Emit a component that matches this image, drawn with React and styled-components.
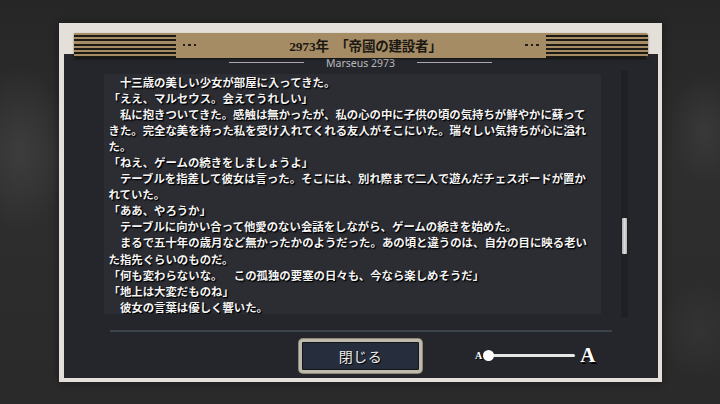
import React from 'react'
import styled, { createGlobalStyle } from 'styled-components'

const GlobalStyle = createGlobalStyle`
  html, body {
    margin: 0;
    padding: 0;
    background: #2b2b2b;
  }
`

const Page = styled.div`
  width: 720px;
  height: 404px;
  display: flex;
  align-items: center;
  justify-content: center;
  background:
    radial-gradient(ellipse 70px 120px at 20px 150px, rgba(80, 80, 80, 0.45), transparent 70%),
    radial-gradient(ellipse 50px 80px at 705px 130px, rgba(80, 80, 80, 0.35), transparent 70%),
    radial-gradient(ellipse 60px 70px at 700px 330px, rgba(70, 70, 70, 0.3), transparent 70%),
    linear-gradient(#262626, #2e2e2e 40%, #2a2a2a);
`

const Frame = styled.div`
  width: 603px;
  height: 359px;
  box-sizing: border-box;
  padding-top: 10px;
  display: flex;
  flex-direction: column;
  background: #e4dfd8;
  box-shadow: 0 0 8px rgba(0, 0, 0, 0.4);
`

const Header = styled.div`
  position: relative;
  z-index: 2;
  height: 25px;
  margin: 0 14px 0 15px;
  display: flex;
  align-items: center;
  background: #a58c64;
  border-radius: 1px 3px 3px 1px;
  box-shadow: 0 1px 2px rgba(0, 0, 0, 0.55);
`

const Stripes = styled.div`
  width: 102px;
  height: 25px;
  background: repeating-linear-gradient(
    to bottom,
    #a58c64 0,
    #a58c64 2.2px,
    #1d1a15 2.2px,
    #1d1a15 4.2px
  );
  border-radius: ${p => (p.$right ? '0 3px 3px 0' : '1px 0 0 1px')};
`

const Dots = styled.div`
  display: flex;
  gap: 3px;
  margin: ${p => (p.$right ? '0 7px 0 0' : '0 0 0 7px')};

  span {
    width: 2.5px;
    height: 2.5px;
    background: #231e17;
  }
`

const Title = styled.div`
  flex: 1;
  text-align: center;
  padding-left: 10px;
  font-family: 'Liberation Serif', 'Noto Sans CJK JP', serif;
  font-weight: 700;
  font-size: 13.5px;
  color: #1c1914;
  letter-spacing: -0.2px;
`

const Panel = styled.div`
  position: relative;
  z-index: 1;
  flex: 1;
  margin: -4px 4px 4px 5px;
  padding: 3px 0 5px;
  display: flex;
  flex-direction: column;
  background: #25262b;
`

const Subtitle = styled.div`
  height: 12px;
  display: flex;
  align-items: center;
  justify-content: center;
  gap: 22px;
  font-family: 'Noto Sans', sans-serif;
  font-size: 10.5px;
  color: #b9b9bb;
`

const Rule = styled.div`
  width: 75px;
  height: 1px;
  background: #a9a9ab;
`

const Body = styled.div`
  margin-top: 5px;
  height: 240px;
  display: flex;
`

const TextBox = styled.div`
  width: 497px;
  margin-left: 40px;
  overflow: hidden;
  box-sizing: border-box;
  padding-left: 5px;
  background: #2c2d33;
`

const Story = styled.div`
  width: 483px;
  font-family: 'Noto Sans CJK JP', sans-serif;
  font-weight: 700;
  font-size: 11.4px;
  line-height: 16.1px;
  color: #f4f4f4;
  text-shadow: 1px 1px 0 #000, 1px 1px 2px #000;
  text-spacing-trim: space-all;
  line-break: strict;

  p {
    margin: 0;
  }
`

const Track = styled.div`
  width: 7px;
  margin: -3px 0 -3px 20px;
  background: #1f2024;
`

const Thumb = styled.div`
  width: 5px;
  height: 36px;
  margin: 147px 0 0 1px;
  border-radius: 1px;
  background: linear-gradient(to right, #a9a9a9, #dcdcdc 50%, #b5b5b5);
`

const Separator = styled.div`
  height: 2px;
  margin: 16px 46px 0;
  background: #3d434b;
`

const Footer = styled.div`
  margin-top: 7px;
  height: 34px;
  display: grid;
  grid-template-columns: 1fr 123px 1fr;
  align-items: center;
`

const CloseButton = styled.button`
  grid-column: 2;
  width: 123px;
  height: 34px;
  padding: 0;
  box-sizing: border-box;
  border: 3px solid #bfbaab;
  border-radius: 4px;
  background: #262d3c;
  box-shadow: inset 0 0 0 1px #15171c, 0 0 0 1px #8d8877;
  font-family: 'Liberation Serif', 'Noto Sans CJK JP', serif;
  font-size: 14px;
  color: #eeeeee;
  letter-spacing: 0.5px;
  text-shadow: 1px 1px 1px #000;
`

const SizeControl = styled.div`
  grid-column: 3;
  display: flex;
  align-items: center;
  padding-left: 53px;
`

const Glyph = styled.span`
  font-family: 'Liberation Serif', serif;
  font-weight: 700;
  font-size: ${p => (p.$big ? '21px' : '10px')};
  line-height: 1;
  color: #ffffff;
  text-shadow: ${p => (p.$big ? '1.5px 1.5px 0 #000' : '1px 1px 0 #000')};
  margin-left: ${p => (p.$big ? '5px' : '0')};
`

const SliderTrack = styled.div`
  position: relative;
  width: 86px;
  height: 3px;
  margin-left: 7px;
  border-radius: 2px;
  background: #e6e6e6;
`

const Knob = styled.div`
  position: absolute;
  left: -6px;
  top: -4.5px;
  width: 11px;
  height: 11px;
  border-radius: 50%;
  background: #ffffff;
`

const story = [
  '　十三歳の美しい少女が部屋に入ってきた。',
  '「ええ、マルセウス。会えてうれしい」',
  '　私に抱きついてきた。感触は無かったが、私の心の中に子供の頃の気持ちが鮮やかに蘇ってきた。完全な美を持った私を受け入れてくれる友人がそこにいた。瑞々しい気持ちが心に溢れた。',
  '「ねえ、ゲームの続きをしましょうよ」',
  '　テーブルを指差して彼女は言った。そこには、別れ際まで二人で遊んだチェスボードが置かれていた。',
  '「ああ、やろうか」',
  '　テーブルに向かい合って他愛のない会話をしながら、ゲームの続きを始めた。',
  '　まるで五十年の歳月など無かったかのようだった。あの頃と違うのは、自分の目に映る老いた指先ぐらいのものだ。',
  '「何も変わらないな。　この孤独の要塞の日々も、今なら楽しめそうだ」',
  '「地上は大変だものね」',
  '　彼女の言葉は優しく響いた。',
]

function App() {
  return (
    <>
      <GlobalStyle />
      <Page>
        <Frame>
          <Header>
            <Stripes />
            <Dots><span /><span /><span /></Dots>
            <Title>2973年　「帝國の建設者」</Title>
            <Dots $right><span /><span /><span /></Dots>
            <Stripes $right />
          </Header>
          <Panel>
            <Subtitle>
              <Rule />
              Marseus 2973
              <Rule />
            </Subtitle>
            <Body>
              <TextBox>
                <Story>
                  {story.map((line, i) => (
                    <p key={i}>{line}</p>
                  ))}
                </Story>
              </TextBox>
              <Track>
                <Thumb />
              </Track>
            </Body>
            <Separator />
            <Footer>
              <CloseButton>閉じる</CloseButton>
              <SizeControl>
                <Glyph>A</Glyph>
                <SliderTrack>
                  <Knob />
                </SliderTrack>
                <Glyph $big>A</Glyph>
              </SizeControl>
            </Footer>
          </Panel>
        </Frame>
      </Page>
    </>
  )
}

export default App
